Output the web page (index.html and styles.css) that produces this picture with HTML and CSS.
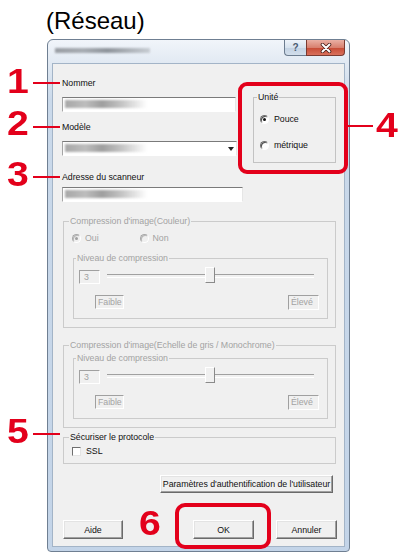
FILE: index.html
```html
<!DOCTYPE html>
<html lang="fr">
<head>
<meta charset="utf-8">
<title>Réseau</title>
<link rel="stylesheet" href="styles.css">
</head>
<body>
<div class="caption">(Réseau)</div>
<div class="window">
  <div class="titlebar">
    <div class="title-blur"></div>
    <div class="caption-btns">
      <div class="btn-help">?</div>
      <div class="btn-close">
        <svg width="12" height="10" viewBox="0 0 12 10"><path d="M2.5 1.5 L9.5 8.5 M9.5 1.5 L2.5 8.5" stroke="#4a1e18" stroke-width="3.6" stroke-linecap="round"/><path d="M2.5 1.5 L9.5 8.5 M9.5 1.5 L2.5 8.5" stroke="#ffffff" stroke-width="2" stroke-linecap="round"/></svg>
      </div>
    </div>
  </div>
  <div class="client">
    <div class="top">
      <div class="left-col">
        <div class="lbl l-name">Nommer</div>
        <div class="field f-name"><div class="blur"></div></div>
        <div class="lbl l-model">Modèle</div>
        <div class="field combo"><div class="blur"></div><svg class="arrow" width="6" height="4" viewBox="0 0 6 4"><path d="M0 0 H6 L3 4 Z" fill="#222"/></svg></div>
        <div class="lbl l-addr">Adresse du scanneur</div>
        <div class="field f-addr"><div class="blur"></div></div>
      </div>
      <fieldset class="grp unit">
        <legend>Unité</legend>
        <div class="opt opt-1"><span class="radio on"></span>Pouce</div>
        <div class="opt opt-2"><span class="radio"></span>métrique</div>
      </fieldset>
    </div>

    <fieldset class="grp dis g-color">
      <legend>Compression d'image(Couleur)</legend>
      <div class="yn">
        <span class="radio dis on"></span><span class="yn-t">Oui</span>
        <span class="radio dis r-non"></span><span class="yn-t">Non</span>
      </div>
      <fieldset class="grp dis level">
        <legend>Niveau de compression</legend>
        <div class="lv-row1">
          <div class="numbox">3</div>
          <div class="slider"><div class="thumb"></div></div>
        </div>
        <div class="lv-row2">
          <div class="tag">Faible</div>
          <div class="tag tag-hi">Élevé</div>
        </div>
      </fieldset>
    </fieldset>

    <fieldset class="grp dis g-gray">
      <legend>Compression d'image(Echelle de gris / Monochrome)</legend>
      <fieldset class="grp dis level level-2">
        <legend>Niveau de compression</legend>
        <div class="lv-row1">
          <div class="numbox">3</div>
          <div class="slider"><div class="thumb"></div></div>
        </div>
        <div class="lv-row2">
          <div class="tag">Faible</div>
          <div class="tag tag-hi">Élevé</div>
        </div>
      </fieldset>
    </fieldset>

    <fieldset class="grp g-sec">
      <legend>Sécuriser le protocole</legend>
      <div class="chk-row"><span class="chk"></span>SSL</div>
    </fieldset>

    <div class="auth-row"><div class="btn btn-auth">Paramètres d'authentification de l'utilisateur</div></div>

    <div class="bottom-row">
      <div class="btn btn-aide">Aide</div>
      <div class="btn btn-ok">OK</div>
      <div class="btn btn-cancel">Annuler</div>
    </div>
  </div>
</div>

<div class="num n1">1</div><div class="rline r1"></div>
<div class="num n2">2</div><div class="rline r2"></div>
<div class="num n3">3</div><div class="rline r3"></div>
<div class="num n4">4</div><div class="rline r4"></div>
<div class="num n5">5</div><div class="rline r5"></div>
<div class="num n6">6</div>
<div class="rframe f-unit"></div>
<div class="rframe f-ok"></div>
</body>
</html>
```

FILE: styles.css
```css
* { box-sizing: border-box; }
html, body { margin: 0; padding: 0; }
body {
  width: 401px;
  height: 553px;
  background: #ffffff;
  position: relative;
  overflow: hidden;
  font-family: "Liberation Sans", Arial, sans-serif;
  font-size: 8.8px;
  letter-spacing: -0.05px;
  color: #111;
}
.caption {
  font-family: "Liberation Sans", Arial, sans-serif;
  font-size: 24px;
  letter-spacing: 0;
  line-height: 24px;
  height: 33px;
  padding: 9px 0 0 46px;
  color: #000;
}
.window {
  margin: 6px 0 0 47px;
  width: 303px;
  height: 513px;
  border: 1px solid #6f7f92;
  border-radius: 6px 6px 4px 4px;
  background: linear-gradient(180deg, #f1f5fa 0, #e2eaf3 22px, #cad9ea 60px, #c3d4e8 100%);
  padding: 0 4px 4px;
  display: flex;
  flex-direction: column;
}
.titlebar {
  height: 23px;
  display: flex;
  justify-content: space-between;
  align-items: flex-start;
}
.title-blur {
  margin: 8px 0 0 3px;
  width: 95px;
  height: 5px;
  background: linear-gradient(90deg, #8c9096, #9da2a8 30%, #7f858c 55%, #a6abb1 80%, #c3c8ce);
  filter: blur(1.1px);
  opacity: 0.85;
}
.caption-btns { display: flex; }
.btn-help {
  width: 22px;
  height: 16px;
  border: 1px solid #6c7c8f;
  border-top: none;
  border-right: none;
  border-radius: 0 0 0 4px;
  background: linear-gradient(180deg, #eef3f9, #d7e2ee 50%, #c3d2e3 51%, #d2deeb);
  color: #4b5b70;
  font-size: 10px;
  font-weight: bold;
  line-height: 15px;
  text-align: center;
}
.btn-close {
  width: 39px;
  height: 16px;
  border: 1px solid #7b3a30;
  border-top: none;
  border-radius: 0 0 4px 0;
  background: linear-gradient(180deg, #eab0a4, #d8806f 50%, #c64a34 51%, #d9705b);
  display: flex;
  align-items: center;
  justify-content: center;
}
.client {
  width: 293px;
  height: 484px;
  background: #f0f0f0;
  border: 1px solid #a3b4c7;
  padding: 0 0 0 9px;
  display: flex;
  flex-direction: column;
}
.top {
  display: flex;
  align-items: flex-start;
}
.left-col { display: flex; flex-direction: column; width: 181px; }
.lbl { line-height: 12px; height: 12px; white-space: nowrap; }
.l-name { margin-top: 13px; }
.l-model { margin-top: 9px; }
.l-addr { margin-top: 15px; }
.field {
  height: 15px;
  background: #ffffff;
  border-top: 1px solid #7a7a7a;
  border-left: 1px solid #a5a5a5;
  border-right: 1px solid #e6e6e6;
  border-bottom: 1px solid #ffffff;
  position: relative;
  overflow: hidden;
}
.f-name { margin-top: 8px; width: 174px; }
.combo { margin-top: 8px; width: 175px; }
.f-addr { margin-top: 4px; width: 181px; }
.blur {
  margin: 2px 0 0 2px;
  width: 82px;
  height: 8px;
  background: linear-gradient(90deg, #a8a8a8, #bdbdbd 25%, #9e9e9e 45%, #c6c6c6 70%, rgba(230,230,230,0));
  filter: blur(1.2px);
}
.arrow { position: absolute; right: 2px; top: 5px; }

.grp {
  margin: 0;
  padding: 0;
  min-width: 0;
  border: 1px solid #cbcbcb;
}
.grp > legend {
  padding: 0 1px;
  line-height: 12px;
  white-space: nowrap;
}
.dis > legend, .dis { color: #a3a3a3; }
.unit {
  margin: 27px 0 0 10px;
  width: 83px;
  height: 72px;
  border-color: #c3c3c3;
}
.unit > legend { margin-left: 3px; color: #111; }
.opt { display: flex; align-items: center; height: 12px; line-height: 12px; }
.opt-1 { margin-top: 10px; }
.opt-2 { margin-top: 14px; }
.opt .radio { margin: 0 5px 0 6px; }

.radio {
  width: 9px;
  height: 9px;
  border-radius: 50%;
  border: 1px solid;
  border-color: #707070 #ffffff #ffffff #707070;
  background: #ffffff;
  box-shadow: inset 1px 1px 0 #505050;
  position: relative;
  flex: none;
}
.radio.on::after {
  content: "";
  position: absolute;
  left: 2px;
  top: 2px;
  width: 3px;
  height: 3px;
  border-radius: 50%;
  background: #111;
}
.radio.dis {
  background: #f0f0f0;
  border-color: #a8a8a8 #ffffff #ffffff #a8a8a8;
  box-shadow: inset 1px 1px 0 #b8b8b8;
}
.radio.dis.on::after { background: #a0a0a0; }

.g-color {
  margin: 13px 0 0 1px;
  width: 273px;
  height: 113px;
}
.g-color > legend, .g-gray > legend, .g-sec > legend { margin-left: 5px; }
.yn {
  margin-top: 5px;
  height: 12px;
  display: flex;
  align-items: center;
  padding-left: 8px;
}
.yn-t { margin-left: 4px; line-height: 12px; }
.r-non { margin-left: 41px; }

.level {
  margin: 8px 0 0 9px;
  width: 255px;
  height: 67px;
}
.level > legend { margin-left: 2px; }
.level-2 { margin-top: 1px; }
.lv-row1 {
  margin-top: 3px;
  height: 16px;
  display: flex;
  align-items: flex-start;
}
.numbox {
  margin: 3px 0 0 5px;
  width: 21px;
  height: 14px;
  border-top: 1px solid #a0a0a0;
  border-left: 1px solid #a0a0a0;
  border-right: 1px solid #ffffff;
  border-bottom: 1px solid #ffffff;
  padding-left: 4px;
  line-height: 12px;
  color: #a0a0a0;
}
.slider {
  margin-left: 7px;
  width: 207px;
  height: 16px;
  position: relative;
}
.slider::before {
  content: "";
  position: absolute;
  left: 0;
  right: 0;
  top: 7px;
  height: 2px;
  border-top: 1px solid #a0a0a0;
  border-bottom: 1px solid #ffffff;
}
.thumb {
  position: absolute;
  left: 98px;
  top: 0;
  width: 10px;
  height: 16px;
  background: #f0f0f0;
  border-top: 1px solid #ffffff;
  border-left: 1px solid #ffffff;
  border-right: 1px solid #8a8a8a;
  border-bottom: 1px solid #8a8a8a;
}
.lv-row2 {
  margin-top: 12px;
  display: flex;
  justify-content: space-between;
  padding: 0 8px 0 21px;
}
.tag {
  width: 29px;
  height: 14px;
  border-top: 1px solid #a0a0a0;
  border-left: 1px solid #a0a0a0;
  border-right: 1px solid #ffffff;
  border-bottom: 1px solid #ffffff;
  line-height: 12px;
  padding-left: 2px;
  color: #a3a3a3;
}
.tag-hi { width: 31px; height: 15px; }

.g-gray {
  margin: 11px 0 0 1px;
  width: 273px;
  height: 89px;
}
.g-sec {
  margin: 3px 0 0 1px;
  width: 273px;
  height: 33px;
}
.chk-row {
  margin-top: 2px;
  height: 12px;
  display: flex;
  align-items: center;
  padding-left: 8px;
  line-height: 12px;
}
.chk {
  width: 9px;
  height: 9px;
  background: #ffffff;
  border-top: 1px solid #6f6f6f;
  border-left: 1px solid #6f6f6f;
  border-right: 1px solid #e4e4e4;
  border-bottom: 1px solid #e4e4e4;
  margin-right: 5px;
}

.btn {
  background: #f0f0f0;
  border: 1px solid;
  border-color: #ffffff #6a6a6a #6a6a6a #ffffff;
  box-shadow: inset -1px -1px 0 #a0a0a0, inset 1px 1px 0 #e3e3e3;
  display: flex;
  align-items: center;
  justify-content: center;
  white-space: nowrap;
  color: #111;
}
.auth-row { margin-top: 11px; padding-left: 98px; display: flex; }
.btn-auth { width: 173px; height: 18px; }
.bottom-row { margin-top: 27px; padding-left: 1px; display: flex; }
.btn-aide, .btn-ok, .btn-cancel { height: 19px; width: 60px; }
.btn-ok { margin-left: 70px; width: 61px; }
.btn-cancel { margin-left: 22px; width: 61px; }

/* annotations (overlays) */
.num {
  position: absolute;
  font-weight: bold;
  font-size: 35px;
  letter-spacing: 0;
  line-height: 35px;
  color: #e3001b;
  transform: scaleX(1.12);
  transform-origin: left top;
}
.n1 { left: 7px; top: 63px; }
.n2 { left: 7px; top: 105px; }
.n3 { left: 7px; top: 156px; }
.n4 { left: 376px; top: 107px; }
.n5 { left: 7px; top: 413px; }
.n6 { left: 139px; top: 505px; }
.rline {
  position: absolute;
  height: 2px;
  background: #e3001b;
}
.r1 { left: 33px; top: 82px; width: 27px; }
.r2 { left: 33px; top: 126px; width: 27px; }
.r3 { left: 33px; top: 176px; width: 27px; }
.r4 { left: 348px; top: 125px; width: 25px; }
.r5 { left: 33px; top: 433px; width: 27px; }
.rframe {
  position: absolute;
  border: 4px solid #e3001b;
}
.f-unit { left: 238px; top: 82px; width: 110px; height: 92px; border-radius: 9px; }
.f-ok { left: 175px; top: 503px; width: 96px; height: 46px; border-radius: 10px; }
```
